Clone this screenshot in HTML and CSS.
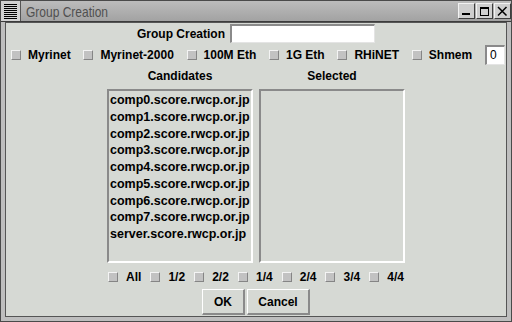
FILE: index.html
```html
<!DOCTYPE html>
<html lang="en">
<head>
    <meta charset="UTF-8">
    <title>Group Creation</title>
    <link rel="stylesheet" href="styles.css">
</head>
<body>
    <div class="window">
        <div class="titlebar">
            <span class="menu"><span class="lines"></span></span>
            <span class="title">Group Creation</span>
            <span class="controls">
                <span class="wbtn">
                    <svg width="15" height="14" viewBox="0 0 15 14"><rect x="3" y="9" width="8" height="2" fill="#000"/></svg>
                </span>
                <span class="wbtn">
                    <svg width="15" height="14" viewBox="0 0 15 14"><rect x="3.5" y="3.5" width="8" height="8" fill="none" stroke="#000"/><rect x="3" y="3" width="9" height="2" fill="#000"/></svg>
                </span>
                <span class="wbtn">
                    <svg width="15" height="14" viewBox="0 0 15 14"><path d="M3 3 L11.5 11.5 M11.5 3 L3 11.5" stroke="#000" stroke-width="1.5"/></svg>
                </span>
            </span>
        </div>

        <div class="body">
            <!-- Group name -->
            <div class="name-row">
                <span>Group Creation</span>
                <span class="entry"></span>
            </div>

            <!-- Network types -->
            <div class="net-row">
                <label class="check"><span class="box"></span>Myrinet</label>
                <label class="check"><span class="box"></span>Myrinet-2000</label>
                <label class="check"><span class="box"></span>100M Eth</label>
                <label class="check"><span class="box"></span>1G Eth</label>
                <label class="check"><span class="box"></span>RHiNET</label>
                <label class="check"><span class="box"></span>Shmem</label>
                <span class="spin">0</span>
            </div>

            <div class="heads">
                <span>Candidates</span>
                <span>Selected</span>
            </div>

            <div class="lists">
                <div class="list">
                    <div>comp0.score.rwcp.or.jp</div>
                    <div>comp1.score.rwcp.or.jp</div>
                    <div>comp2.score.rwcp.or.jp</div>
                    <div>comp3.score.rwcp.or.jp</div>
                    <div>comp4.score.rwcp.or.jp</div>
                    <div>comp5.score.rwcp.or.jp</div>
                    <div>comp6.score.rwcp.or.jp</div>
                    <div>comp7.score.rwcp.or.jp</div>
                    <div>server.score.rwcp.or.jp</div>
                </div>
                <div class="list"></div>
            </div>

            <!-- Fractions -->
            <div class="filters">
                <label class="check"><span class="box"></span>All</label>
                <label class="check"><span class="box"></span>1/2</label>
                <label class="check"><span class="box"></span>2/2</label>
                <label class="check"><span class="box"></span>1/4</label>
                <label class="check"><span class="box"></span>2/4</label>
                <label class="check"><span class="box"></span>3/4</label>
                <label class="check"><span class="box"></span>4/4</label>
            </div>

            <div class="actions">
                <button class="btn ok">OK</button>
                <button class="btn cancel">Cancel</button>
            </div>
        </div>
    </div>
</body>
</html>
```

FILE: styles.css
```css
* {
    box-sizing: border-box;
}
body {
    margin: 0;
    font-family: "Liberation Sans", Arial, sans-serif;
    font-size: 12px;
    font-weight: bold;
    color: #000;
}
.window {
    width: 512px;
    height: 322px;
    border: 1px solid #4a4a4a;
    background: #bebebe;
    display: flex;
    flex-direction: column;
}
.titlebar {
    height: 21px;
    display: flex;
    align-items: center;
    border-bottom: 1px solid #3c3c3c;
    background: linear-gradient(#bcbcbc, #a2a2a2);
}
.menu {
    width: 20px;
    height: 20px;
    display: flex;
    align-items: center;
    justify-content: center;
    background: #d2d2d2;
    border-right: 1px solid #555;
}
.lines {
    width: 13px;
    height: 15px;
    background: repeating-linear-gradient(#000 0 1px, transparent 1px 2px);
}
.title {
    margin-left: 5px;
    font-size: 15px;
    font-weight: normal;
    color: #505050;
    transform: scaleX(0.8);
    transform-origin: left center;
    white-space: nowrap;
}
.controls {
    margin-left: auto;
    display: flex;
    gap: 1px;
}
.wbtn {
    width: 17px;
    height: 16px;
    display: flex;
    align-items: center;
    justify-content: center;
    background: #cfcfcf;
    border: 1px solid;
    border-color: #f2f2f2 #3e3e3e #3e3e3e #f2f2f2;
}
.body {
    flex: 1;
    margin: 0 4px 4px;
    border: 1px solid #555;
    background: #d6d9d4;
    display: flex;
    flex-direction: column;
    align-items: center;
    padding-top: 1px;
}
.name-row {
    height: 19px;
    display: flex;
    align-items: center;
    gap: 5px;
}
.entry, .spin {
    background: #fff;
    border-style: solid;
    border-width: 2px 1px 1px 2px;
    border-color: #8a8a8a #e4e4e4 #e4e4e4 #8a8a8a;
}
.entry {
    width: 145px;
    height: 19px;
}
.net-row {
    align-self: stretch;
    height: 20px;
    margin-top: 2px;
    padding: 0 1px 0 5px;
    display: flex;
    justify-content: space-between;
    align-items: center;
}
.spin {
    width: 20px;
    height: 20px;
    padding-left: 3px;
    font-weight: normal;
    line-height: 16px;
}
.check {
    display: flex;
    align-items: center;
    gap: 7px;
    white-space: nowrap;
}
.box {
    width: 10px;
    height: 10px;
    background: #c2c2c2;
    border: 1px solid;
    border-color: #f4f4f4 #858585 #858585 #f4f4f4;
}
.heads, .lists {
    display: grid;
    grid-template-columns: 146px 146px;
    column-gap: 6px;
}
.heads {
    margin-top: 4px;
    line-height: 14px;
    text-align: center;
}
.lists {
    margin-top: 6px;
    height: 174px;
}
.list {
    border: 2px solid;
    border-color: #8a8a8a #fff #fff #8a8a8a;
    padding: 1px 0 0 1px;
    font-size: 12.5px;
    line-height: 16.75px;
    white-space: nowrap;
    overflow: hidden;
}
.filters {
    width: 296px;
    height: 16px;
    margin-top: 6px;
    display: flex;
    justify-content: space-between;
    align-items: center;
}
.filters .check {
    gap: 8px;
}
.actions {
    display: flex;
    gap: 2px;
    margin-top: 4px;
}
.btn {
    height: 26px;
    padding: 0;
    font: inherit;
    color: #000;
    background: #d6d9d4;
    border-style: solid;
    border-width: 1px 2px 2px 1px;
    border-color: #fff #8a8a8a #8a8a8a #fff;
}
.ok {
    width: 43px;
}
.cancel {
    width: 63px;
}
```
